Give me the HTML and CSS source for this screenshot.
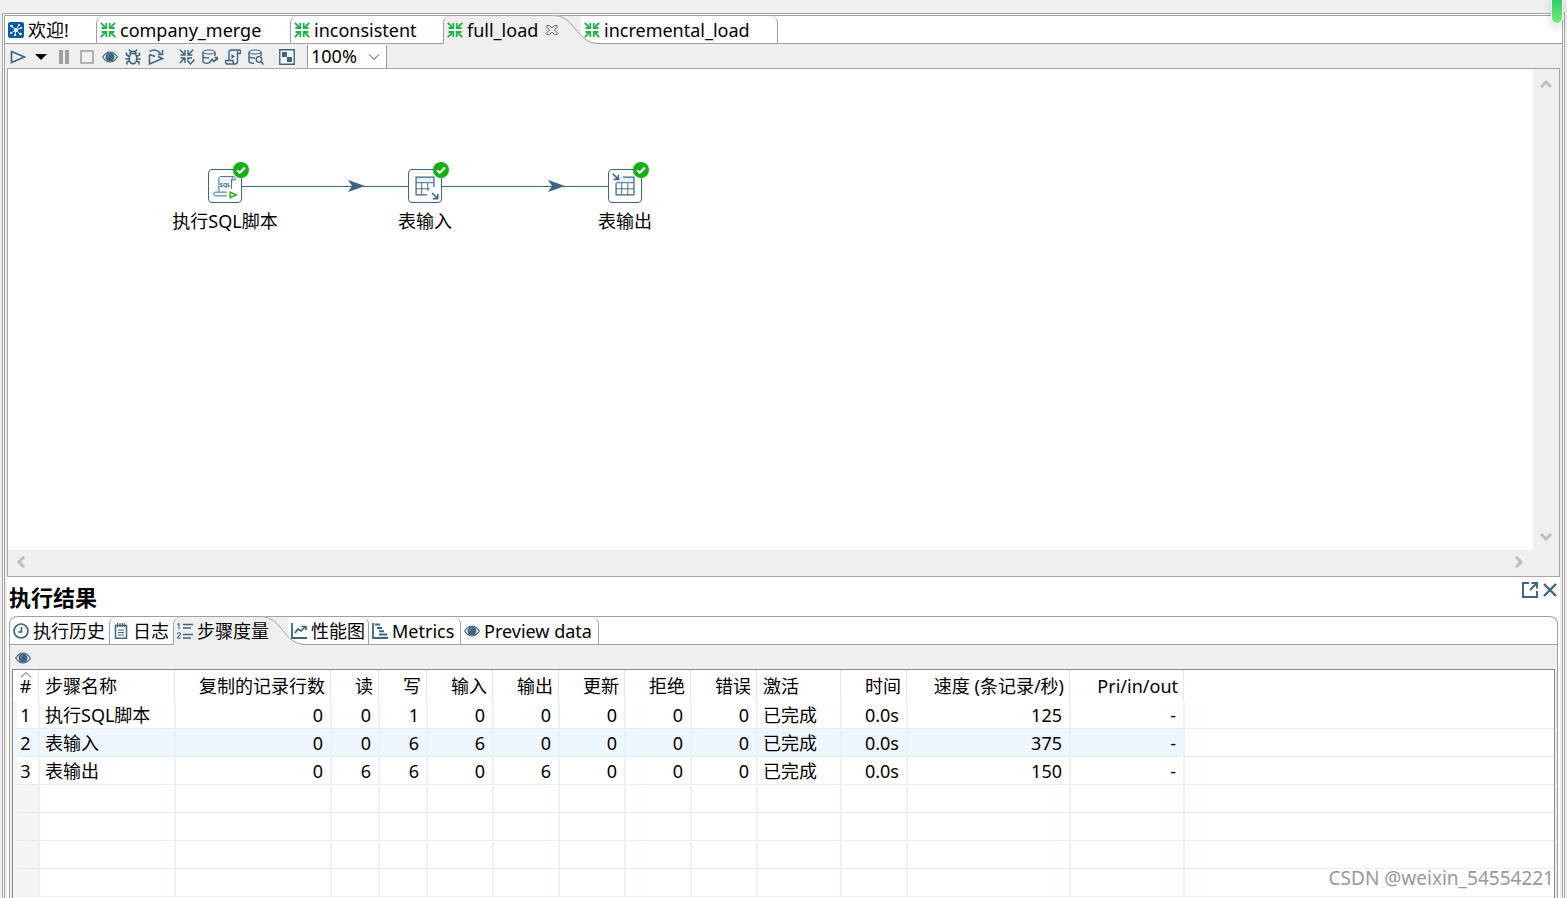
FILE: index.html
```html
<!DOCTYPE html>
<html lang="zh-CN">
<head>
<meta charset="utf-8">
<title>full_load</title>
<link rel="stylesheet" href="styles.css">
</head>
<body>
<svg class="defs" aria-hidden="true">
  <symbol id="trans" viewBox="0 0 16 16"><path d="M.8.8l5 5M15.2.8l-5 5M.8 15.2l5-5M15.2 15.2l-5-5" stroke-width="1.9"/><path d="M1.500 6h4.800V1M14.500 6H9.700V1M1.500 10h4.800v5M14.500 10H9.700v5" stroke-width="1.8"/></symbol>
  <symbol id="eye" viewBox="0 0 16 16"><path d="M.7 8C3 4.300 5.500 3 8 3s5 1.300 7.300 5C13 11.700 10.500 13 8 13S3 11.700.7 8z" stroke-width="1.200"/><circle cx="8" cy="8" r="4.500" fill="currentColor" stroke="none"/><path d="M5.800 8c0-1.500.8-2.500 2-2.700" stroke="#8fa8b8" stroke-width=".8"/></symbol>
  <symbol id="curve" viewBox="0 0 46 29"><path class="curve-fill" d="M0 0C10 0 15 4 21 11S33 28 46 28V29H0z"/><path class="curve-line" d="M0 .5C10 .5 15 4 21 11S33 28.500 46 28.500"/></symbol>
  <symbol id="db" viewBox="0 0 16 16"><ellipse cx="7" cy="3" rx="6" ry="2"/><path d="M1 3v9.500c0 1.100 2 1.700 5 1.900M13 3v4M1 7.500c0 1.200 3 1.500 6 1.500" stroke-width="1.400"/></symbol>
  <symbol id="ok" viewBox="0 0 16 16"><circle cx="8" cy="8" r="8" fill="#0fb00f" stroke="none"/><path d="M4 8.300l2.800 2.500L12 5.500" stroke="#fff" stroke-width="2.200"/></symbol>
</svg>

<div class="window">
  <main class="folder">
    <nav class="tabs" aria-label="转换">
      <button class="tab"><svg class="icon" viewBox="0 0 16 16"><rect width="16" height="16" rx="2" fill="#0a5ba6" stroke="none"/><g stroke="#fff" stroke-width=".9"><path d="M8 8L3 4M8 8l3-5M8 8l5-2M8 8l-5 3M8 8l4 4M8 8l-1 5"/></g><g fill="#fff" stroke="none"><circle cx="8" cy="8" r="2"/><circle cx="3.500" cy="4" r="1.300"/><circle cx="11" cy="3" r="1"/><circle cx="13" cy="6" r="1"/><circle cx="3" cy="11" r="1"/><circle cx="12.500" cy="12" r="1.300"/><circle cx="7" cy="13" r="1"/></g></svg><span>欢迎!</span></button>
      <button class="tab tab-merge"><svg class="icon green"><use href="#trans"/></svg><span>company_merge</span></button>
      <button class="tab tab-inconsistent"><svg class="icon green"><use href="#trans"/></svg><span>inconsistent</span></button>
      <button class="tab active tab-full"><svg class="icon green"><use href="#trans"/></svg><span>full_load</span><svg class="close" viewBox="0 0 12 12"><path d="M1 1.500h2.500L6 4l2.500-2.500H11V3.500L8.500 6 11 8.500v2H8.500L6 8l-2.500 2.500H1v-2L3.500 6 1 3.500z"/></svg><svg class="curve"><use href="#curve"/></svg></button>
      <button class="tab after tab-incremental"><svg class="icon green"><use href="#trans"/></svg><span>incremental_load</span></button>
    </nav>

    <div class="toolbar">
      <button class="tool" aria-label="运行"><svg class="icon" viewBox="0 0 16 16"><path d="M1.500 2.500v11L14.500 8z" stroke-width="1.700"/></svg></button>
      <button class="tool" aria-label="运行选项"><svg class="icon" viewBox="0 0 16 16"><path d="M2 5h12L8 11z" fill="#000" stroke="none"/></svg></button>
      <button class="tool muted" aria-label="暂停"><svg class="icon" viewBox="0 0 16 16"><path d="M5 1v14M11 1v14" stroke-width="4"/></svg></button>
      <button class="tool muted" aria-label="停止"><svg class="icon" viewBox="0 0 16 16"><path d="M2 2h12v12H2z" stroke-width="1.600"/></svg></button>
      <button class="tool" aria-label="预览"><svg class="icon"><use href="#eye"/></svg></button>
      <button class="tool" aria-label="调试"><svg class="icon" viewBox="0 0 16 16"><ellipse cx="8" cy="9.500" rx="3.800" ry="5.200" stroke-width="1.600"/><path d="M5 5c0-2 1.500-2.800 3-2.800S11 3 11 5M5.500 2.500L4 .5M10.500 2.500l1.500-2M4.500 7.500L1.500 6V3.500M11.500 7.500l3-1.500V3.500M4 10H.3M12 10h3.700M4.600 12l-2.600 1v2.500M11.400 12l2.600 1v2.500" stroke-width="1.500"/></svg></button>
      <button class="tool" aria-label="重放"><svg class="icon" viewBox="0 0 16 16"><path d="M1.500 5.500v9.500L14.500 9.500 10 7.500M1.500 5.500l5.500 2M1.500 2.500C5 .3 10 .5 12.500 4.500M14.500 1v4.500H10" stroke-width="1.500"/></svg></button>
      <i class="gap"></i>
      <button class="tool" aria-label="校验"><svg class="icon" viewBox="0 0 16 16"><path d="M.8.8l5 5M14.200.8l-5 5M.8 14l5-5M1.500 6h4.500V1M13.500 6H9V1M1.500 9H6v5M9 13V9h4M9 12l2.500 3L15.500 10.500" stroke-width="1.400"/></svg></button>
      <button class="tool" aria-label="影响分析"><svg class="icon" viewBox="0 0 16 16"><use href="#db"/><path d="M6.500 14.500l3.500-4 2 2 3.500-4M12.500 8.500h3v3" stroke-width="1.600"/></svg></button>
      <button class="tool" aria-label="生成SQL"><svg class="icon" viewBox="0 0 16 16"><path d="M4 11V3c0-1.500 1-2 2-2h8.500c.7 0 1 .5 1 1v2.500H12.500V2M12.500 4.500V12c0 2-1 3-2.500 3H2c-1 0-1.500-1-1.500-3.500h7.500c0 2 .7 3.500 2 3.500" stroke-width="1.400"/><path d="M6.500 5v5l3.500-2.500z" fill="currentColor" stroke="none"/></svg></button>
      <button class="tool" aria-label="浏览数据库"><svg class="icon" viewBox="0 0 16 16"><use href="#db"/><circle cx="11" cy="10.500" r="2.800" stroke-width="1.300"/><path d="M13 12.500l2.500 3" stroke-width="1.500"/></svg></button>
      <i class="gap"></i>
      <button class="tool" aria-label="显示结果"><svg class="icon" viewBox="0 0 16 16"><path d="M.8.8h14.400v14.400H.8z" fill="#fff" stroke-width="1.400"/><path d="M3 3h5v5H3zM8 8h5v5H8z" fill="currentColor" stroke="none"/></svg></button>
      <i class="gap"></i>
      <label class="zoom"><select aria-label="缩放"><option>100%</option></select><svg viewBox="0 0 12 8"><path d="M1 1.500l5 5 5-5"/></svg></label>
    </div>

    <section class="editor">
      <div class="canvas">
        <svg class="hops" viewBox="0 0 700 240"><path d="M234 117.500h166M434 117.500h166"/><path class="head" d="M340 111l17 6-17 6 4-6zM540 111l17 6-17 6 4-6z"/></svg>
        <div class="step step-sql"><div class="box"><svg viewBox="0 0 34 34"><path d="M10.500 23V9.500c0-2 1-2.500 2-2.500H26c1 0 2 1 2 3.500h-3.500" fill="#edf6fb"/><path d="M24.500 10.500c0-2 .5-3.500 1.500-3.500M24 10v10M19 23.500H7c-2.500 0-2.500 4 0 4h12" fill="#edf6fb"/><text x="11.500" y="18">SQL</text><path class="run" d="M22.500 23.500v6l6.500-3z"/></svg></div><svg class="badge"><use href="#ok"/></svg><span>执行SQL脚本</span></div>
        <div class="step step-in"><div class="box"><svg viewBox="0 0 34 34"><path d="M7 7h19v6H7z" fill="#e2f3fb" stroke="none"/><path d="M26.500 18V7.500h-19v19H19" stroke-width="1.300"/><path d="M7.500 13.500H26M7.500 20H22M13.500 13.500v13M20 13.500v9"/><path d="M24.500 24.500l6 6M30.500 25.500v5H25.500" stroke-width="1.700"/></svg></div><svg class="badge"><use href="#ok"/></svg><span>表输入</span></div>
        <div class="step step-out"><div class="box"><svg viewBox="0 0 34 34"><path d="M12 8h14v5H8z" fill="#e2f3fb" stroke="none"/><path d="M15 7.500h11.500v19h-19V14" stroke-width="1.300"/><path d="M7.500 13.500h19M7.500 20h19M13.500 13.500v13M20 13.500v13"/><path d="M4 4l6 6M10 5v5H5" stroke-width="1.700"/></svg></div><svg class="badge"><use href="#ok"/></svg><span>表输出</span></div>
      </div>
      <div class="vscroll"><button aria-label="向上"><svg viewBox="0 0 12 10"><path d="M1 8l5-5 5 5"/></svg></button><button aria-label="向下"><svg viewBox="0 0 12 10"><path d="M1 2l5 5 5-5"/></svg></button></div>
      <div class="hscroll"><button aria-label="向左"><svg viewBox="0 0 10 12"><path d="M8 1L3 6l5 5"/></svg></button><button aria-label="向右"><svg viewBox="0 0 10 12"><path d="M2 1l5 5-5 5"/></svg></button></div>
    </section>

    <section class="results">
      <header class="results-head">
        <h2>执行结果</h2>
        <div class="results-actions">
          <button aria-label="最大化"><svg class="icon" viewBox="0 0 16 16"><path d="M7 1H1v14h14V9M9.500 1H15v5.500M15 1L8 8" stroke-width="1.900"/></svg></button>
          <button aria-label="关闭"><svg class="icon" viewBox="0 0 16 16"><path d="M2 2l12 12M14 2L2 14" stroke-width="2.400"/></svg></button>
        </div>
      </header>
      <div class="subfolder">
        <nav class="tabs" aria-label="执行结果">
          <button class="tab"><svg class="icon" viewBox="0 0 16 16"><circle cx="8" cy="8" r="7" stroke-width="1.700"/><path d="M8.500 4v5H5" stroke-width="1.700"/></svg><span>执行历史</span></button>
          <button class="tab tab-log"><svg class="icon" viewBox="0 0 16 16"><path d="M2.500 2.500h11v12.700h-11z" stroke-width="1.500"/><path d="M4.500 0v4M7 0v4M9.300 0v4M11.500 0v4M5 7h6M5 9.500h6M5 12h6" stroke-width="1.200"/></svg><span>日志</span></button>
          <button class="tab active tab-metrics"><svg class="icon" viewBox="0 0 16 16"><path d="M6 1.500h10M6 5h8M6 11.500h10M6 15h8" stroke-width="1.500"/><path d="M.5 1.500L2 .5V6M.5 11c0-1.700 3-1.700 3 0 0 1.300-3 2.500-3 4h3.200" stroke-width="1.100"/></svg><span>步骤度量</span><svg class="curve"><use href="#curve"/></svg></button>
          <button class="tab after tab-perf"><svg class="icon" viewBox="0 0 16 16"><path d="M1 0v15h15" stroke-width="1.800"/><path d="M4 10l3-4 3 2 4-4M10.500 3.500H15V7" stroke-width="1.700"/></svg><span>性能图</span></button>
          <button class="tab after tab-gantt"><svg class="icon" viewBox="0 0 16 16"><path d="M1 0v15h15" stroke-width="1.800"/><path d="M3 1.500h5M5 5h5M7 8.300h5M7 11.500h8" stroke-width="2"/></svg><span>Metrics</span></button>
          <button class="tab after tab-preview"><svg class="icon"><use href="#eye"/></svg><span>Preview data</span></button>
        </nav>
        <div class="subtoolbar"><button class="tool" aria-label="显示活动步骤"><svg class="icon"><use href="#eye"/></svg></button></div>
        <div class="grid">
          <table>
            <colgroup><col class="c-num"><col class="c-name"><col class="c-copy"><col class="c-io"><col class="c-io"><col class="c-stat"><col class="c-stat"><col class="c-stat"><col class="c-stat"><col class="c-stat"><col class="c-active"><col class="c-stat"><col class="c-speed"><col class="c-pri"><col></colgroup>
            <thead><tr><th>#<svg class="sort" viewBox="0 0 12 6"><path d="M1 5.500l5-5 5 5"/></svg></th><th class="l">步骤名称</th><th>复制的记录行数</th><th>读</th><th>写</th><th>输入</th><th>输出</th><th>更新</th><th>拒绝</th><th>错误</th><th class="l">激活</th><th>时间</th><th>速度 (条记录/秒)</th><th>Pri/in/out</th><th></th></tr></thead>
            <tbody>
              <tr><td>1</td><td class="l">执行SQL脚本</td><td>0</td><td>0</td><td>1</td><td>0</td><td>0</td><td>0</td><td>0</td><td>0</td><td class="l">已完成</td><td>0.0s</td><td>125</td><td>-</td><td></td></tr>
              <tr class="alt"><td>2</td><td class="l">表输入</td><td>0</td><td>0</td><td>6</td><td>6</td><td>0</td><td>0</td><td>0</td><td>0</td><td class="l">已完成</td><td>0.0s</td><td>375</td><td>-</td><td></td></tr>
              <tr><td>3</td><td class="l">表输出</td><td>0</td><td>6</td><td>6</td><td>0</td><td>6</td><td>0</td><td>0</td><td>0</td><td class="l">已完成</td><td>0.0s</td><td>150</td><td>-</td><td></td></tr>
              <tr class="empty"><td></td><td></td><td></td><td></td><td></td><td></td><td></td><td></td><td></td><td></td><td></td><td></td><td></td><td></td><td></td></tr>
              <tr class="empty"><td></td><td></td><td></td><td></td><td></td><td></td><td></td><td></td><td></td><td></td><td></td><td></td><td></td><td></td><td></td></tr>
              <tr class="empty"><td></td><td></td><td></td><td></td><td></td><td></td><td></td><td></td><td></td><td></td><td></td><td></td><td></td><td></td><td></td></tr>
              <tr class="empty"><td></td><td></td><td></td><td></td><td></td><td></td><td></td><td></td><td></td><td></td><td></td><td></td><td></td><td></td><td></td></tr>
            </tbody>
          </table>
        </div>
      </div>
    </section>
  </main>
</div>
<div class="pill"></div>
<div class="watermark">CSDN @weixin_54554221</div>
</body>
</html>
```
FILE: styles.css
```css
* { box-sizing: border-box; }
body {
  margin: 0;
  height: 100vh;
  overflow: hidden;
  display: flex;
  background: #efefef;
  color: #000;
  font: 18px/24px "Noto Sans", "Noto Sans CJK SC", sans-serif;
}
button, select { font: inherit; color: inherit; border: 0; background: none; padding: 0; margin: 0; }
svg { display: block; fill: none; stroke: currentColor; }
.defs { position: absolute; width: 0; height: 0; }
.icon { width: 16px; height: 16px; flex: none; color: #3d6480; }
.green { color: #22b14c; }

.window {
  flex: 1;
  display: flex;
  margin: 13px 2px 0;
  padding: 1px 1px 0;
  border: 1px solid #a5a5aa;
  border-bottom: 0;
  background: #fff;
}
.folder {
  flex: 1;
  min-width: 0;
  display: flex;
  flex-direction: column;
  border: 1px solid #a0a0a0;
  border-width: 0 1px;
  background: #efefef;
}

.tabs {
  display: flex;
  height: 29px;
  flex: none;
  border: 1px solid #a0a0a0;
  border-width: 1px 0;
  background: #fff;
}
.tab {
  position: relative;
  display: flex;
  align-items: center;
  gap: 4px;
  padding: 1px 3px 0;
  border-left: 1px solid #a0a0a0;
  border-top-left-radius: 7px;
  white-space: nowrap;
}
.tab:first-child { border-left: 0; width: 91px; }
.tab.after { border-left: 0; border-right: 1px solid #a0a0a0; border-radius: 0 7px 0 0; }
.tab.active { z-index: 1; margin-bottom: -1px; padding-top: 0; background: #efefef; }
.tab-merge { width: 194px; }
.tab-inconsistent { width: 153px; }
.tab-full { width: 138px; }
.tab-incremental { width: 197px; }
.tab-full + .after { z-index: 1; }
.curve { position: absolute; left: calc(100% - 29px); top: -1px; width: 46px; height: 29px; }
.active > :not(.curve) { position: relative; z-index: 1; }
.curve-fill { fill: #efefef; stroke: none; }
.curve-line { stroke: #a0a0a0; }
.close { width: 12px; height: 12px; margin-left: 4px; color: #666; }

.toolbar { display: flex; align-items: center; height: 24px; flex: none; padding: 0 1px; }
.tool { width: 23px; height: 24px; display: grid; place-items: center; padding-top: 1px; }
.tool.muted .icon { color: #a0a0a0; }
.gap { width: 8px; }
.zoom {
  position: relative;
  display: flex;
  height: 23px;
  width: 80px;
  margin-left: 1px;
  border: 1px solid #999;
  border-width: 0 1px;
  background: #fff;
}
.zoom select { appearance: none; width: 100%; padding-left: 3px; line-height: 23px; }
.zoom svg { position: absolute; right: 6px; top: 8px; width: 12px; height: 8px; color: #444; pointer-events: none; }

.editor {
  flex: 1;
  min-height: 0;
  margin: 0 2px;
  display: grid;
  grid-template: 1fr 26px / 1fr 26px;
  border: 1px solid #a5a5aa;
  background: #efefef;
}
.canvas { position: relative; overflow: hidden; background: #fff; }
.hops { position: absolute; left: 0; top: 0; width: 700px; height: 240px; color: #3d6480; }
.head { fill: #3d6480; stroke: none; }
.step { position: absolute; top: 100px; width: 120px; display: flex; flex-direction: column; align-items: center; gap: 6px; }
.step-sql { left: 157px; }
.step-in { left: 357px; }
.step-out { left: 557px; }
.box { width: 34px; height: 34px; border: 1px solid #3d6480; border-radius: 4px; background: #fff; color: #3d6480; }
.box svg { width: 32px; height: 32px; }
.box text { font: bold 6px "Noto Sans", sans-serif; fill: #3d6480; stroke: none; }
.run { stroke: #0fb00f; stroke-width: 1.5; }
.badge { position: absolute; left: 68px; top: -7px; width: 16px; height: 16px; }
.vscroll, .hscroll { display: flex; justify-content: space-between; color: #bfbfbf; stroke-width: 3; }
.vscroll { flex-direction: column; align-items: center; padding: 10px 0 8px; }
.hscroll { align-items: center; padding: 0 9px 2px 8px; }
.vscroll svg { width: 12px; height: 10px; }
.hscroll svg { width: 10px; height: 12px; }

.results { flex: none; margin: 0 2px; padding: 0 2px; background: #fff; }
.results-head { display: flex; justify-content: space-between; height: 39px; padding-top: 5px; }
.results-head h2 { margin: 0; font-size: 22px; line-height: 30px; }
.results-actions { display: flex; align-items: flex-start; gap: 4px; }
.subfolder {
  border: 1px solid #a0a0a0;
  border-width: 0 1px;
  border-radius: 8px 8px 0 0;
  background: #efefef;
}
.subfolder .tabs { border-radius: 8px 8px 0 0; }
.subfolder .tab:first-child { width: 99px; }
.tab-log { width: 64px; }
.tab-metrics { width: 115px; }
.tab-perf { width: 81px; }
.tab-gantt { width: 92px; }
.tab-preview { width: 138px; }
.subtoolbar { height: 24px; padding: 0 1px; }
.grid { margin: 0 2px; border: 1px solid #828790; border-bottom: 0; background: #fff; padding-bottom: 1px; }

table { width: 100%; table-layout: fixed; border-collapse: separate; border-spacing: 0; }
.c-num { width: 26px; }
.c-name { width: 136px; }
.c-copy { width: 156px; }
.c-io { width: 48px; }
.c-stat { width: 66px; }
.c-active { width: 84px; }
.c-speed { width: 163px; }
.c-pri { width: 114px; }
th, td { padding: 0; text-align: right; white-space: nowrap; }
th { position: relative; height: 31px; padding-right: 5px; font-weight: normal; border-right: 1px solid #e5e5e5; }
td { height: 28px; padding-right: 7px; border: solid #ebf1fa; border-width: 0 1px; border-bottom: 1px solid #ededed; }
th:last-child { border-right: 0; }
td:last-child { border-right: 0; }
.l { text-align: left; padding-left: 6px; }
td.l { padding-left: 5px; }
th:first-child { text-align: center; padding: 0; }
td:first-child { text-align: center; padding: 0 4px 0 0; border-left: 4px solid #f5f5f5; }
.alt td:not(:last-child) { background: #eef7ff; }
.alt td:first-child { border-left-color: #eef7ff; }
.empty td:first-child { background: #f5f5f5; }
.sort { position: absolute; left: 7px; top: 2px; width: 12px; height: 6px; color: #555; }

.pill {
  position: absolute;
  top: 0;
  right: 5px;
  width: 10px;
  height: 23px;
  border-radius: 0 0 5px 5px;
  background: linear-gradient(#2fd06e, #70ea74);
  box-shadow: 0 0 0 1px #f4f4f4, 0 3px 8px 2px rgba(0, 0, 0, .12);
}
.watermark {
  position: absolute;
  right: 13px;
  bottom: 8px;
  color: #999;
  font-size: 19px;
  text-shadow: 1px 1px 0 #fff;
}
```
